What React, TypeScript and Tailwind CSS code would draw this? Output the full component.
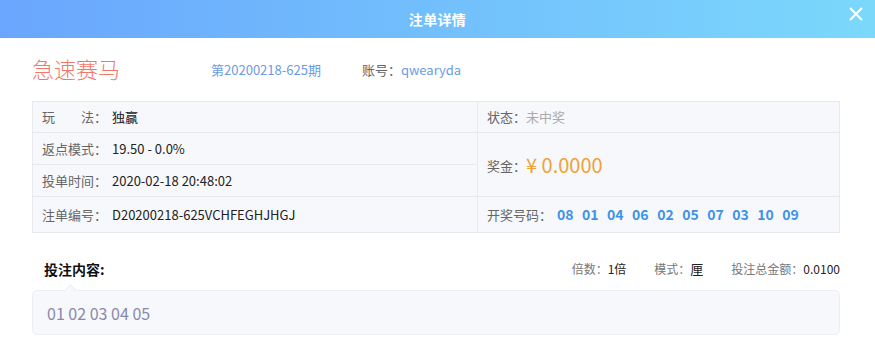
import React from 'react';

const font = { fontFamily: '"Noto Sans CJK SC", "Liberation Sans", sans-serif' };

const drawNumbers = ['08', '01', '04', '06', '02', '05', '07', '03', '10', '09'];

function Cell({ label, children, className = '' }: { label: React.ReactNode; children: React.ReactNode; className?: string }) {
  return (
    <div className={`flex items-center pl-[9px] text-[13px] ${className}`}>
      <span className="w-[70px] shrink-0 text-[#666] whitespace-pre">{label}</span>
      {children}
    </div>
  );
}

export default function App() {
  return (
    <div className="w-[875px] h-[350px] bg-white overflow-hidden" style={font}>
      {/* header */}
      <div className="relative h-[38px] flex items-center justify-center bg-gradient-to-r from-[#6aa6fd] to-[#7bd8fb]">
        <span className="text-white text-[14px] font-bold tracking-wide">注单详情</span>
        <button className="absolute right-[12px] top-[7px] text-white">
          <svg width="14" height="14" viewBox="0 0 14 14" fill="none" stroke="white" strokeWidth="2">
            <path d="M1 1 L13 13 M13 1 L1 13" />
          </svg>
        </button>
      </div>

      <div className="px-[32px] pr-[35px]">
        {/* title row */}
        <div className="flex items-end h-[52px] pb-[7px]">
          <span className="text-[22px] leading-[30px] text-[#f17868] font-light">急速赛马</span>
          <span className="ml-[91px] mb-[4px] text-[13px] text-[#6b9ce3]">第20200218-625期</span>
          <span className="ml-[41px] mb-[4px] text-[13px] text-[#666]">账号：</span>
          <span className="mb-[4px] text-[13px] text-[#6b9ce3]">qwearyda</span>
        </div>

        {/* detail table */}
        <div className="mt-[11px] grid grid-cols-[445px_1fr] grid-rows-[31px_32px_32px_35px] bg-[#f7f8fb] border border-[#e8eaf0] text-[#333]">
          <Cell label="玩　　法：" className="border-r border-b border-[#e8eaf0]">
            <span className="text-[#222]">独赢</span>
          </Cell>
          <div className="flex items-center pl-[9px] text-[13px] border-b border-[#e8eaf0]">
            <span className="text-[#666]">状态：</span>
            <span className="text-[#aaa]">未中奖</span>
          </div>
          <Cell label="返点模式：" className="border-r border-b border-[#e8eaf0]">
            <span className="text-[#222]">19.50 - 0.0%</span>
          </Cell>
          <div className="row-span-2 flex items-center pl-[9px] border-b border-[#e8eaf0]">
            <span className="text-[13px] text-[#666] mt-[3px]">奖金：</span>
            <span className="text-[20px] text-[#f0a137]">¥&nbsp;0.0000</span>
          </div>
          <Cell label="投单时间：" className="border-r border-b border-[#e8eaf0]">
            <span className="text-[#222]">2020-02-18 20:48:02</span>
          </Cell>
          <Cell label="注单编号：" className="border-r border-[#e8eaf0]">
            <span className="text-[#222]">D20200218-625VCHFEGHJHGJ</span>
          </Cell>
          <div className="flex items-center pl-[9px]">
            <span className="text-[13px] text-[#666]">开奖号码：</span>
            <div className="ml-[5px] flex gap-[8.5px] text-[14px] font-bold text-[#3d93e8]">
              {drawNumbers.map((n, i) => (
                <span key={i}>{n}</span>
              ))}
            </div>
          </div>
        </div>

        {/* bet content */}
        <div className="mt-[21px] flex items-center justify-between h-[30px] text-[12px]">
          <span className="ml-[12px] text-[14px] font-bold text-[#111]">投注内容:</span>
          <div className="flex items-center text-[#777]">
            <span>倍数：</span>
            <span className="text-[#222]">1倍</span>
            <span className="ml-[28px]">模式：</span>
            <span className="text-[#222] text-[13px]">厘</span>
            <span className="ml-[28px]">投注总金额：</span>
            <span className="text-[#222]">0.0100</span>
          </div>
        </div>
        <div className="relative mt-[6px] h-[45px] flex items-center pl-[14px] rounded-[5px] bg-[#f7f8fb] border border-[#eceef3] text-[16px] text-[#8a89ac]">
          <span className="absolute left-[33px] -top-[5px] w-[9px] h-[9px] rotate-45 bg-[#f7f8fb] border-l border-t border-[#eceef3]" />
          01 02 03 04 05
        </div>
      </div>
    </div>
  );
}
